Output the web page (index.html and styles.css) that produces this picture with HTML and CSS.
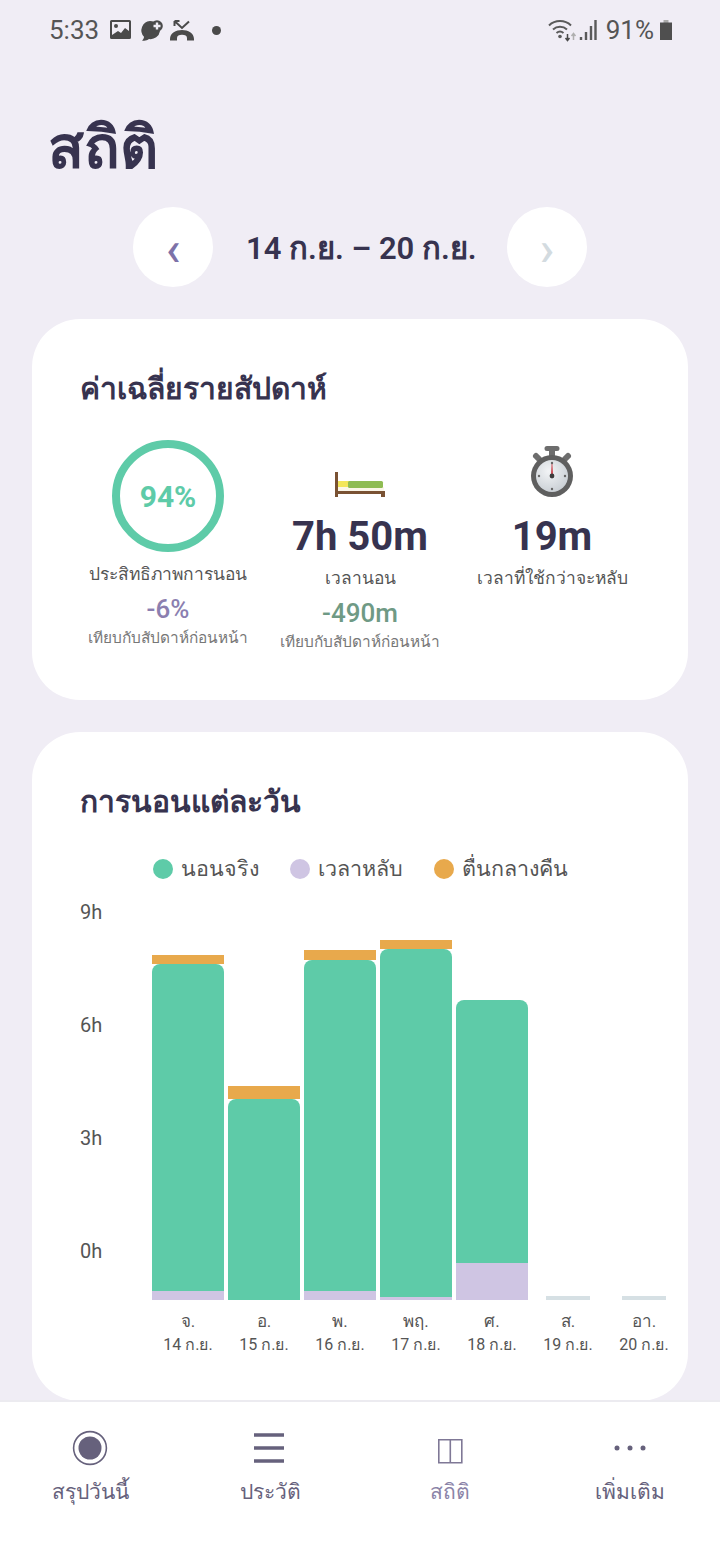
FILE: index.html
```html
<!DOCTYPE html>
<html lang="th">
<head>
<meta charset="utf-8">
<title>สถิติ</title>
<link rel="stylesheet" href="styles.css">
</head>
<body>
<div class="screen">
  <div class="main">
    <div class="status">
      <div class="status-left">
        <span class="time">5:33</span>
        <svg class="si" width="22" height="20" viewBox="0 0 22 20"><path fill="#4a4a4a" d="M1.500 0h18a1.500 1.500 0 0 1 1.500 1.500v16a1.500 1.500 0 0 1-1.500 1.500h-18A1.500 1.500 0 0 1 0 17.500v-16A1.500 1.500 0 0 1 1.500 0z"/><path fill="#f0edf5" d="M2 2h17v9l-4-3-4 5-3-2-6 4z"/><circle cx="6" cy="6" r="2" fill="#4a4a4a"/></svg>
        <svg class="si si-chat" width="24" height="21" viewBox="0 0 24 21"><path fill="#4a4a4a" d="M11 1a10 10 0 0 1 4 .8 6.500 6.500 0 0 0 6 9.200 9.500 9.500 0 0 1-11 8c-2 1.500-4 2-7 1.500 1.300-1 2-2.300 2-3.800A9.300 9.300 0 0 1 11 1z"/><circle cx="18" cy="6" r="5.800" fill="#4a4a4a"/><path stroke="#f0edf5" stroke-width="2.400" d="M18 2.500v7M14.500 6h7"/></svg>
        <svg class="si" width="26" height="21" viewBox="0 0 26 21"><path fill="#4a4a4a" d="M1 19c0-6 6-9 12-9s12 3 12 9v1.500h-7v-2.500c0-2-2-3.200-5-3.200S8 16 8 18v2.500H1z"/><path stroke="#4a4a4a" stroke-width="2" fill="none" d="M20 1.500 13 8 5.500 1M5.500 1v5M5.500 1h5"/></svg>
        <span class="dot-note"></span>
      </div>
      <div class="status-right">
        <svg width="30" height="24" viewBox="0 0 30 24"><g fill="none" stroke="#5a5a5a" stroke-width="2"><path d="M1 7.500a16 16 0 0 1 22 0"/><path d="M5 11.500a10.500 10.500 0 0 1 14 0"/><path d="M8.500 15a5.500 5.500 0 0 1 7 0"/></g><circle cx="12" cy="18.500" r="1.800" fill="#5a5a5a"/><path stroke="#4a4a4a" stroke-width="1.500" fill="none" d="M19.500 16v6M17.500 20l2 2.500 2-2.500"/><path stroke="#b0b0b0" stroke-width="1.500" fill="none" d="M25.500 22v-6M23.500 18l2-2.500 2 2.500"/></svg>
        <svg width="18" height="22" viewBox="0 0 18 22"><path stroke="#5a5a5a" stroke-width="2.400" d="M2 21v-3M7 21v-8M12 21V7M16.500 21V1"/></svg>
        <span class="batt-text">91%</span>
        <svg class="batt" width="12" height="20" viewBox="0 0 12 20"><path fill="#aaa" d="M3.500 0h5v3h-5z"/><path fill="#4f4f4f" d="M0 2.500h12V20H0z"/></svg>
      </div>
    </div>

    <h1 class="title">สถิติ</h1>

    <div class="date-nav">
      <div class="circle prev">‹</div>
      <div class="range">14 ก.ย. – 20 ก.ย.</div>
      <div class="circle next">›</div>
    </div>

    <section class="card card-week">
      <h2 class="card-title">ค่าเฉลี่ยรายสัปดาห์</h2>
      <div class="stats">
        <div class="stat">
          <div class="ring">94%</div>
          <div class="label label-first">ประสิทธิภาพการนอน</div>
          <div class="delta purple">-6%</div>
          <div class="sub">เทียบกับสัปดาห์ก่อนหน้า</div>
        </div>
        <div class="stat stat-pad">
          <div class="emoji">
            <svg width="50" height="25" viewBox="0 0 50 25"><path fill="#f3e65a" d="M3 9h12v7H3z"/><path fill="#fbf6e8" d="M3 15h46v4H3z"/><rect x="13" y="9" width="35" height="7" rx="1.500" fill="#8fbc52"/><path fill="#7a5233" d="M0 0h3v25H0zM3 19h47v3H3zM46 19h4v6h-4z"/></svg>
          </div>
          <div class="big">7h 50m</div>
          <div class="label">เวลานอน</div>
          <div class="delta green">-490m</div>
          <div class="sub">เทียบกับสัปดาห์ก่อนหน้า</div>
        </div>
        <div class="stat stat-pad">
          <div class="emoji">
            <svg width="46" height="51" viewBox="0 0 46 51"><defs><radialGradient id="face" cx="0.400" cy="0.350" r="0.800"><stop offset="0" stop-color="#f2f4f6"/><stop offset="1" stop-color="#c3c9cf"/></radialGradient></defs><path fill="#6d6d6d" d="M18 0h10a2.500 2.500 0 0 1 0 5h-2v5h-6V5h-2a2.500 2.500 0 0 1 0-5z"/><path stroke="#6d6d6d" stroke-width="6" stroke-linecap="round" d="M7 10l3 3M39 10l-3 3"/><circle cx="23" cy="30" r="21" fill="#5f5f5f"/><circle cx="23" cy="30" r="16" fill="url(#face)"/><path fill="#c8323c" d="M22 30l.7-13h.6l.7 13z"/><circle cx="23" cy="30" r="2.400" fill="#3c3c3c"/><g fill="#666"><circle cx="23" cy="17" r="1.200"/><circle cx="23" cy="43" r="1.200"/><circle cx="10" cy="30" r="1.200"/><circle cx="36" cy="30" r="1.200"/></g></svg>
          </div>
          <div class="big">19m</div>
          <div class="label">เวลาที่ใช้กว่าจะหลับ</div>
        </div>
      </div>
    </section>

    <section class="card card-daily">
      <h2 class="card-title">การนอนแต่ละวัน</h2>
      <div class="legend">
        <span class="leg"><i class="ldot l-green"></i>นอนจริง</span>
        <span class="leg"><i class="ldot l-lilac"></i>เวลาหลับ</span>
        <span class="leg"><i class="ldot l-orange"></i>ตื่นกลางคืน</span>
      </div>
      <div class="chart">
        <div class="yaxis"><span>9h</span><span>6h</span><span>3h</span><span>0h</span></div>
        <div class="cols">
          <div class="col">
            <div class="plot"><div class="o" style="height:9px"></div><div class="g" style="height:327px"></div><div class="l" style="height:9px"></div></div>
            <div class="xl">จ.<br><small>14 ก.ย.</small></div>
          </div>
          <div class="col">
            <div class="plot"><div class="o" style="height:13px"></div><div class="g" style="height:201px"></div></div>
            <div class="xl">อ.<br><small>15 ก.ย.</small></div>
          </div>
          <div class="col">
            <div class="plot"><div class="o" style="height:10px"></div><div class="g" style="height:331px"></div><div class="l" style="height:9px"></div></div>
            <div class="xl">พ.<br><small>16 ก.ย.</small></div>
          </div>
          <div class="col">
            <div class="plot"><div class="o" style="height:9px"></div><div class="g" style="height:348px"></div><div class="l" style="height:3px"></div></div>
            <div class="xl">พฤ.<br><small>17 ก.ย.</small></div>
          </div>
          <div class="col">
            <div class="plot"><div class="g" style="height:263px"></div><div class="l" style="height:37px"></div></div>
            <div class="xl">ศ.<br><small>18 ก.ย.</small></div>
          </div>
          <div class="col">
            <div class="plot"><div class="none"></div></div>
            <div class="xl">ส.<br><small>19 ก.ย.</small></div>
          </div>
          <div class="col">
            <div class="plot"><div class="none"></div></div>
            <div class="xl">อา.<br><small>20 ก.ย.</small></div>
          </div>
        </div>
      </div>
    </section>
  </div>

  <nav class="tabs">
    <div class="tab">
      <svg width="36" height="36" viewBox="0 0 36 36"><circle cx="18" cy="18" r="16.400" fill="none" stroke="#66617c" stroke-width="1.600"/><circle cx="18" cy="18" r="11.500" fill="#66617c"/></svg>
      <span>สรุปวันนี้</span>
    </div>
    <div class="tab">
      <svg width="36" height="36" viewBox="0 0 36 36"><path stroke="#66617c" stroke-width="3.400" d="M2 5h30M2 18h30M2 31h30"/></svg>
      <span>ประวัติ</span>
    </div>
    <div class="tab tab-active">
      <svg width="36" height="36" viewBox="0 0 36 36"><path fill="none" stroke="#7f7896" stroke-width="1.600" d="M6.800 9.800h23v23h-23zM18.300 9.800v23"/></svg>
      <span>สถิติ</span>
    </div>
    <div class="tab">
      <svg width="36" height="36" viewBox="0 0 36 36"><g fill="#66617c"><circle cx="5" cy="18" r="2.500"/><circle cx="18" cy="18" r="2.500"/><circle cx="31" cy="18" r="2.500"/></g></svg>
      <span>เพิ่มเติม</span>
    </div>
  </nav>
</div>
</body>
</html>
```
FILE: styles.css
```css
* { box-sizing: border-box; }
html, body { margin: 0; padding: 0; }
body { font-family: Roboto, "Liberation Sans", sans-serif; color: #37334f; }
.screen { width: 720px; height: 1560px; display: flex; flex-direction: column; background: #f0edf5; overflow: hidden; }
.main { flex: 1; min-height: 0; overflow: hidden; }

.status { height: 60px; padding: 0 48px 0 49px; display: flex; justify-content: space-between; align-items: center; color: #555; }
.status-left, .status-right { display: flex; align-items: center; }
.time { font-size: 26px; margin-right: 11px; }
.si { margin-right: 7px; }
.si-chat { margin-right: 6px; }
.dot-note { width: 9px; height: 9px; border-radius: 50%; background: #4a4a4a; margin-left: 10px; }
.status-right svg { margin-right: 1px; }
.status-right .batt { margin-right: 0; }
.batt-text { font-size: 26px; margin: 0 6px 0 8px; }

.title { margin: 53px 0 0 48px; font-size: 59px; line-height: 70px; font-weight: 700; color: #37334f; }

.date-nav { margin-top: 24px; display: flex; justify-content: center; align-items: center; gap: 33px; }
.circle { width: 80px; height: 80px; border-radius: 50%; background: #fff; display: flex; align-items: center; justify-content: center; font-size: 48px; font-weight: 500; line-height: 1; padding-top: 4px; }
.prev { color: #7d72a8; }
.next { color: #d3dbe0; }
.range { width: 228px; padding-top: 2px; text-align: center; font-size: 31px; font-weight: 600; color: #37334f; white-space: nowrap; }

.card { margin: 32px 32px 0; background: #fff; border-radius: 48px; padding: 48px; }
.card-week { height: 381px; }
.card-daily { height: 669px; }
.card-title { margin: 0; font-size: 30px; line-height: 44px; font-weight: 700; color: #37334f; }

.stats { margin-top: 29px; display: grid; grid-template-columns: repeat(3, 176px); gap: 16px; }
.stat { display: flex; flex-direction: column; align-items: center; text-align: center; white-space: nowrap; }
.ring { width: 112px; height: 112px; border: 8px solid #5ecba8; border-radius: 50%; display: flex; align-items: center; justify-content: center; font-size: 30px; font-weight: 700; color: #5ecba8; }
.emoji { height: 54px; display: flex; align-items: flex-end; }
.stat-pad { padding-top: 3px; }
.big { font-size: 40px; line-height: 52px; margin-top: 14px; font-weight: 700; color: #37334f; }
.label { font-size: 17.400px; line-height: 28px; color: #555; margin-top: 1px; }
.label-first { margin-top: 8px; }
.delta { font-size: 26px; line-height: 34px; font-weight: 500; margin-top: 4px; }
.purple { color: #8b7fb0; }
.green { color: #6f9a85; }
.sub { font-size: 15.400px; line-height: 24px; color: #777; }

.legend { margin-top: 25px; display: flex; justify-content: center; gap: 31px; padding-left: 1px; margin-left: -48px; margin-right: -48px; }
.leg { display: flex; align-items: center; font-size: 21.500px; line-height: 40px; color: #555; }
.ldot { width: 20px; height: 20px; border-radius: 50%; margin-right: 8px; }
.l-green { background: #5ecba8; }
.l-lilac { background: #cfc5e3; }
.l-orange { background: #e8a94c; }

.chart { margin-top: 11px; margin-right: -42px; display: flex; }
.yaxis { width: 70px; height: 360px; display: flex; flex-direction: column; gap: 89px; font-size: 20px; line-height: 24px; color: #555; }
.cols { display: flex; }
.col { width: 76px; display: flex; flex-direction: column; align-items: center; }
.plot { width: 72px; height: 400px; display: flex; flex-direction: column; justify-content: flex-end; align-items: center; }
.o { width: 100%; background: #e8a94c; }
.g { width: 100%; background: #5ecba8; border-radius: 8px 8px 0 0; }
.l { width: 100%; background: #cfc5e3; }
.none { width: 44px; height: 4px; background: #d6e0e4; }
.xl { margin-top: 10px; text-align: center; font-size: 17px; line-height: 23px; color: #555; white-space: nowrap; }
.xl small { font-size: 16px; }

.tabs { height: 160px; flex: none; position: relative; background: #fff; border-top: 2px solid #ecebf0; padding-top: 28px; display: grid; grid-template-columns: repeat(4, 180px); }
.tab { display: flex; flex-direction: column; align-items: center; color: #66617c; font-size: 21px; }
.tab span { margin-top: 8px; line-height: 36px; }
.tab-active { color: #8b84a8; }
```
